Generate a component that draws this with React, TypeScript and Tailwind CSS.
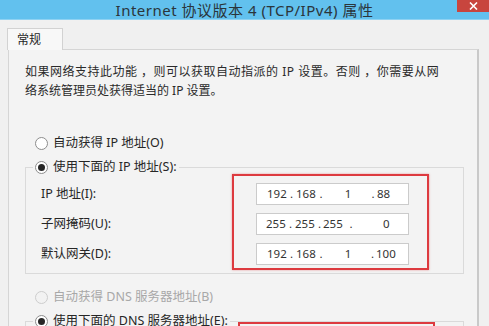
import React from "react";

type Piece = [string, string];

const rows: { label: string; pieces: Piece[]; pl: string }[] = [
  {
    label: "IP 地址(I):",
    pl: "pl-[10px]",
    pieces: [
      ["192", "w-[20px]"],
      [".", "w-[9px] text-center"],
      ["168", "w-[20px]"],
      [".", "w-[10px] text-center"],
      ["1", "w-[44px] text-center"],
      [".", "w-[6px] text-center"],
      ["88", "pl-[1px]"],
    ],
  },
  {
    label: "子网掩码(U):",
    pl: "pl-[9px]",
    pieces: [
      ["255", "w-[20px]"],
      [".", "w-[9px] text-center"],
      ["255", "w-[21px]"],
      [".", "w-[7px] text-center"],
      ["255", "w-[21px]"],
      [".", "w-[14px] text-center"],
      ["0", "pl-[25px]"],
    ],
  },
  {
    label: "默认网关(D):",
    pl: "pl-[10px]",
    pieces: [
      ["192", "w-[20px]"],
      [".", "w-[9px] text-center"],
      ["168", "w-[20px]"],
      [".", "w-[10px] text-center"],
      ["1", "w-[44px] text-center"],
      [".", "w-[5px] text-center"],
      ["100", "pl-[1px]"],
    ],
  },
];

function Radio({ checked, disabled }: { checked?: boolean; disabled?: boolean }) {
  return (
    <span
      className={
        disabled
          ? "flex h-[13px] w-[13px] shrink-0 items-center justify-center rounded-full border border-[#cdcdcd] bg-[#f2f2f2]"
          : "flex h-[13px] w-[13px] shrink-0 items-center justify-center rounded-full border border-[#8d8d8d] bg-white"
      }
    >
      {checked ? <span className="h-[7px] w-[7px] rounded-full bg-[#262626]" /> : null}
    </span>
  );
}

export default function App() {
  return (
    <div
      className="h-[326px] w-[489px] overflow-hidden bg-[#f0f0f0] text-[#262626]"
      style={{ fontFamily: '"Noto Sans", "Noto Sans CJK SC", sans-serif' }}
    >
      {/* title bar */}
      <div className="relative flex h-[20px] items-center justify-center border-b border-[#8fd2f2] bg-[#62c1ee]">
        <span className="text-[15px] leading-[20px] tracking-[0.5px] text-[#2b353b]">
          Internet 协议版本 4 (TCP/IPv4) 属性
        </span>
        <div className="absolute right-0 top-0 flex h-[12px] w-[32px] items-center justify-center bg-[#c8453e]">
          <svg width="9" height="8" viewBox="0 0 9 8">
            <path d="M1 0.5 L8 7.5 M8 0.5 L1 7.5" stroke="white" strokeWidth="1.6" />
          </svg>
        </div>
      </div>

      {/* body */}
      <div className="pl-[8px] pr-[10px] pt-[8px]">
        <div className="relative z-10 -mb-px -ml-px flex h-[22px] w-[56px] items-center border border-b-0 border-[#d2d2d2] bg-[#f8f8f8] pl-[9px] text-[12px]">
          常规
        </div>
        <div className="h-[300px] border border-[#d5d5d5] border-r-2 border-r-[#c9c9c9] bg-[#f3f3f3] pl-[16px] pr-[13px] pt-[12px]">
          <div className="text-[12px] leading-[19px] text-[#2a2a2a]">
            <p className="tracking-[0.5px]">如果网络支持此功能 ，则可以获取自动指派的 IP 设置。否则 ，你需要从网</p>
            <p>络系统管理员处获得适当的 IP 设置。</p>
          </div>

          <div className="mt-[33px] flex h-[20px] items-center gap-[5px] pl-[10px] text-[12.5px]">
            <Radio />
            <span>自动获得 IP 地址(O)</span>
          </div>

          <fieldset className="mt-[7px] border border-[#dadada]">
            <legend className="ml-[7px] flex h-[14px] items-center gap-[5px] px-[2px] text-[12.5px] leading-[14px]">
              <Radio checked />
              <span>使用下面的 IP 地址(S):</span>
            </legend>
            <div className="flex pb-[3px] pl-[15px]">
              <div className="flex w-[191px] flex-col gap-[8px] pt-[9px] text-[12.5px]">
                {rows.map((r) => (
                  <div key={r.label} className="flex h-[22px] items-center">
                    {r.label}
                  </div>
                ))}
              </div>
              <div className="flex w-[197px] flex-col gap-[8px] border-2 border-[#dd3a3f] pb-[3px] pl-[22px] pt-[7px] shadow-[0_0_2px_rgba(221,58,63,0.5)]">
                {rows.map((r) => (
                  <div
                    key={r.label}
                    className={`flex h-[22px] w-[153px] items-center border border-[#cbcbcb] bg-white text-[11.5px] text-[#333] ${r.pl}`}
                  >
                    {r.pieces.map((p, i) => (
                      <span key={i} className={`shrink-0 ${p[1]}`}>
                        {p[0]}
                      </span>
                    ))}
                  </div>
                ))}
              </div>
            </div>
          </fieldset>

          <div className="mt-[13px] flex h-[20px] items-center gap-[5px] pl-[10px] text-[12.5px] text-[#a8a8a8]">
            <Radio disabled />
            <span>自动获得 DNS 服务器地址(B)</span>
          </div>

          <fieldset className="mt-[7px] border border-[#dadada]">
            <legend className="ml-[7px] flex h-[14px] items-center gap-[5px] px-[2px] text-[12.5px] leading-[14px]">
              <Radio checked />
              <span>使用下面的 DNS 服务器地址(E):</span>
            </legend>
            <div className="-mt-[6px] flex pl-[212px]">
              <div className="h-[40px] w-[197px] border-2 border-[#dd3a3f]" />
            </div>
          </fieldset>
        </div>
      </div>
    </div>
  );
}
